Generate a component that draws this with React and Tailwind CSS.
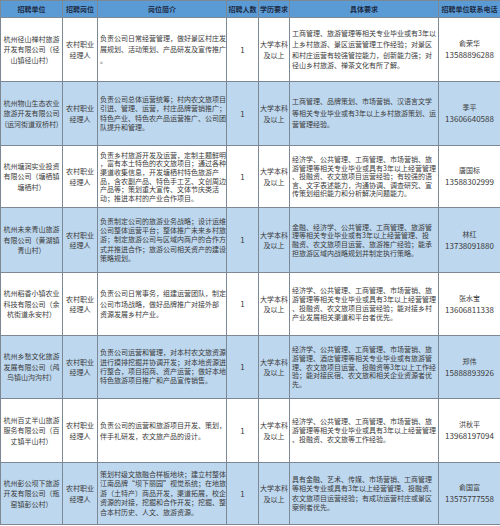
import React from 'react';

const FONT = { fontFamily: '"Noto Sans CJK SC", "Noto Sans", sans-serif' };

const columns = [
  { title: '招聘单位', width: 'w-[62px]' },
  { title: '招聘岗位', width: 'w-[35px]' },
  { title: '岗位简介', width: 'w-[129px]' },
  { title: '招聘人数', width: 'w-[32px]' },
  { title: '学历要求', width: 'w-[31px]' },
  { title: '具体要求', width: 'w-[149px]' },
  { title: '招聘单位联系电话', width: 'w-[62px]' },
];

const rows = [
  {
    height: 'h-[64px]',
    company: ['杭州径山禅村旅游', '开发有限公司（径', '山镇径山村）'],
    intro: ['负责公司日常经营管理，做好景区村庄发', '展规划、活动策划、产品研发及宣传推广', '。'],
    introLeading: 'leading-[10.7px]',
    reqs: [
      '工商管理、旅游管理等相关专业毕业或有3年以',
      '上乡村旅游、景区运营管理工作经验；对景区',
      '和村庄运营有较强管控能力，创新能力强；对',
      '径山乡村旅游、禅茶文化有所了解。',
    ],
    reqsLeading: 'leading-[10.7px]',
    contact: '俞荣华',
    phone: '13588896288',
  },
  {
    height: 'h-[64px]',
    company: ['杭州物山生态农业', '旅游开发有限公司', '(运河街道双桥村)'],
    intro: [
      '负责公司总体运营统筹；村内农文旅项目',
      '引进、管理、运营，村庄品牌营销推广；',
      '特色产业、特色农产品运营推广、公司团',
      '队提升和管理。',
    ],
    introLeading: 'leading-[9.2px]',
    reqs: [
      '工商管理、品牌策划、市场营销、汉语言文学',
      '等相关专业毕业或有3年以上乡村旅游策划、运',
      '营管理经验。',
    ],
    reqsLeading: 'leading-[11.5px]',
    contact: '季平',
    phone: '13606640588',
  },
  {
    height: 'h-[62px]',
    company: ['杭州塘润实业投资', '有限公司（塘栖镇', '塘栖村）'],
    intro: [
      '负责乡村旅游开发及运营，定制主题鲜明',
      '，富有本土特色的农文旅项目；通过各种',
      '渠道收集信息，开发塘栖村特色旅游产',
      '品，含农副产品、特色手工艺、文创周边',
      '产品等；策划重大宣传、文体节庆类活',
      '动；推进本村的产业合作项目。',
    ],
    introLeading: 'leading-[8.6px]',
    reqs: [
      '经济学、公共管理、工商管理、市场营销、旅',
      '游管理等相关专业毕业或具有3年以上经营管理',
      '、投融资、农文旅项目运营经验；有较强的语',
      '言、文字表述能力，沟通协调、调查研究、宣',
      '传策划组织能力和分析解决问题能力。',
    ],
    reqsLeading: 'leading-[8.6px]',
    contact: '唐国标',
    phone: '13588302999',
  },
  {
    height: 'h-[65px]',
    company: ['杭州未来青山旅游', '有限公司（黄湖镇', '青山村）'],
    intro: [
      '负责制定公司的旅游业务战略；设计运维',
      '公司整体运营平台；整体推广未来乡村旅',
      '游；制定旅游公司与区域内商户的合作方',
      '式并推进合作；旅游公司相关资产的建设',
      '策略规划。',
    ],
    introLeading: 'leading-[9.2px]',
    reqs: [
      '金融、经济学、公共管理、工商管理、旅游管',
      '理等相关专业毕业或有3年以上经营管理、投',
      '融资、农文旅项目运营、旅游推广经验；能承',
      '担旅游区域内战略规划并制定执行策略。',
    ],
    reqsLeading: 'leading-[8.6px]',
    contact: '林红',
    phone: '13738091880',
  },
  {
    height: 'h-[63px]',
    company: ['杭州稻香小镇农业', '科技有限公司（余', '杭街道永安村）'],
    intro: [
      '负责公司日常事务，组建运营团队，制定',
      '公司市场战略，做好品牌推广对接外部',
      '资源发展乡村产业。',
    ],
    introLeading: 'leading-[10.8px]',
    reqs: [
      '经济学、公共管理、工商管理、市场营销、旅',
      '游管理等相关专业毕业或具有3年以上经营管理',
      '、投融资、农文旅项目运营经验；能对接乡村',
      '产业发展相关渠道和平台者优先。',
    ],
    reqsLeading: 'leading-[9px]',
    contact: '张水宝',
    phone: '13606811338',
  },
  {
    height: 'h-[63px]',
    company: ['杭州乡愁文化旅游', '发展有限公司（鸬', '鸟镇山沟沟村）'],
    intro: [
      '负责公司运营和管理，对本村农文旅资源',
      '进行摸排挖掘并协调开发；对本地资源进',
      '行整合，项目招商、资产运营；做好本地',
      '特色旅游项目推广和产品宣传销售。',
    ],
    introLeading: 'leading-[9.4px]',
    reqs: [
      '经济学、公共管理、工商管理、市场营销、旅',
      '游管理、酒店管理等相关专业毕业或有旅游管',
      '理、农文旅项目运营、投融资等3年以上工作经',
      '验；能对接民宿、农文旅和相关企业资源者优',
      '先。',
    ],
    reqsLeading: 'leading-[8.9px]',
    contact: '郑伟',
    phone: '15888893926',
  },
  {
    height: 'h-[64px]',
    company: ['杭州百丈半山旅游', '服务有限公司（百', '丈镇半山村）'],
    intro: ['负责公司的运营和旅游项目开发、策划，', '伴手礼研发，农文旅产品的设计。'],
    introLeading: 'leading-[10.7px]',
    reqs: [
      '经济学、公共管理、工商管理、市场营销、旅',
      '游管理等相关专业毕业或具有3年以上经营管理',
      '、投融资、农文旅等工作经验。',
    ],
    reqsLeading: 'leading-[9.2px]',
    contact: '洪秋平',
    phone: '13968197094',
  },
  {
    height: 'h-[62px]',
    company: ['杭州彭公坝下旅游', '开发有限公司（瓶', '窑镇彭公村）'],
    intro: [
      '策划村级文旅融合样板地块；建立村整体',
      '江南品牌“坝下丽园”视觉系统；在地旅',
      '游（土特产）商品开发，渠道拓展，校企',
      '资源的对接，挖掘和合作开发；挖掘、整',
      '合本村历史、人文、旅游资源。',
    ],
    introLeading: 'leading-[9.4px]',
    reqs: [
      '具有金融、艺术、传媒、市场营销、工商管理',
      '等相关专业或具有3年以上经营管理、投融资、',
      '农文旅项目运营经验；有成功运营村庄或景区',
      '案例者优先。',
    ],
    reqsLeading: 'leading-[9.2px]',
    contact: '俞国富',
    phone: '13575777558',
  },
];

function Lines({ lines }) {
  return lines.map((line, i) => (
    <React.Fragment key={i}>
      {i > 0 && <br />}
      {line}
    </React.Fragment>
  ));
}

const cell = 'border border-[#7d8895] text-[7px] text-[#3a3a3a] align-middle';

export default function App() {
  return (
    <div className="w-[500px] h-[526px] bg-white overflow-hidden" style={FONT}>
      <table className="w-[500px] table-fixed border-collapse">
        <colgroup>
          {columns.map((col) => (
            <col key={col.title} className={col.width} />
          ))}
        </colgroup>

        <thead>
          <tr className="h-[17px] bg-[#5b9bd5]">
            {columns.map((col) => (
              <th
                key={col.title}
                className="border border-[#7d8895] text-[7px] font-bold text-[#1d2b45] text-center whitespace-nowrap p-0 leading-[9px]"
              >
                {col.title}
              </th>
            ))}
          </tr>
        </thead>

        <tbody>
          {rows.map((row, index) => (
            <tr
              key={row.phone}
              className={`${row.height} ${index % 2 === 1 ? 'bg-[#bdd7ee]' : 'bg-white'}`}
            >
              <td className={`${cell} text-center leading-[10.5px] px-[1px] whitespace-nowrap`}>
                <Lines lines={row.company} />
              </td>

              <td className={`${cell} text-center leading-[10.5px] whitespace-nowrap`}>
                农村职业
                <br />
                经理人
              </td>

              <td className={`${cell} ${row.introLeading} text-left pl-[2px] whitespace-nowrap`}>
                <Lines lines={row.intro} />
              </td>

              <td className={`${cell} text-center text-[8px]`}>1</td>

              <td className={`${cell} text-center leading-[10.5px] whitespace-nowrap`}>
                大学本科
                <br />
                及以上
              </td>

              <td className={`${cell} ${row.reqsLeading} text-left pl-[2px] whitespace-nowrap`}>
                <Lines lines={row.reqs} />
              </td>

              <td className={`${cell} text-center leading-[11px]`}>
                {row.contact}
                <br />
                <span className="text-[8px]">{row.phone}</span>
              </td>
            </tr>
          ))}
        </tbody>
      </table>
    </div>
  );
}
